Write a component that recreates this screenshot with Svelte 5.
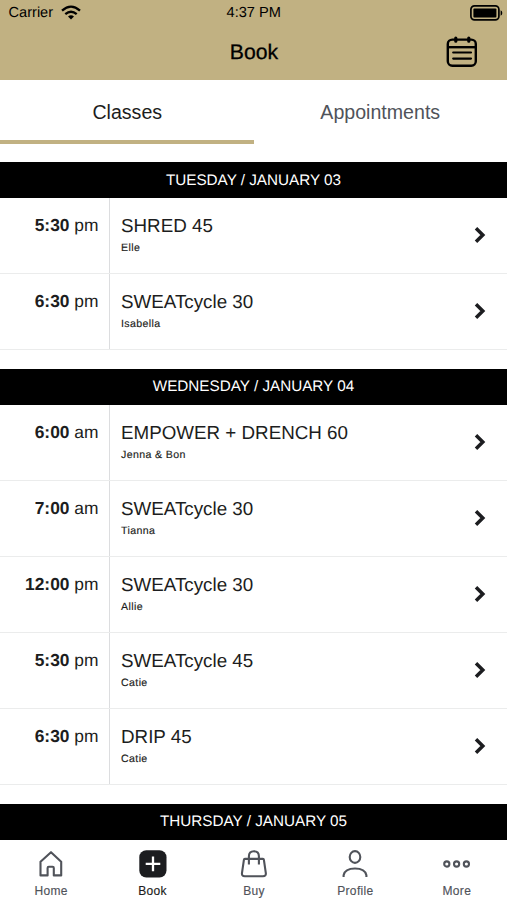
<script>
  const days = [
    {
      label: 'TUESDAY / JANUARY 03',
      classes: [
        { time: '5:30', half: 'pm', name: 'SHRED 45', coach: 'Elle' },
        { time: '6:30', half: 'pm', name: 'SWEATcycle 30', coach: 'Isabella' },
      ],
    },
    {
      label: 'WEDNESDAY / JANUARY 04',
      classes: [
        { time: '6:00', half: 'am', name: 'EMPOWER + DRENCH 60', coach: 'Jenna & Bon' },
        { time: '7:00', half: 'am', name: 'SWEATcycle 30', coach: 'Tianna' },
        { time: '12:00', half: 'pm', name: 'SWEATcycle 30', coach: 'Allie' },
        { time: '5:30', half: 'pm', name: 'SWEATcycle 45', coach: 'Catie' },
        { time: '6:30', half: 'pm', name: 'DRIP 45', coach: 'Catie' },
      ],
    },
    { label: 'THURSDAY / JANUARY 05', classes: [] },
  ];
  const nav = ['Home', 'Book', 'Buy', 'Profile', 'More'];
  let active = $state('Book');
  let tab = $state('Classes');
</script>

<div class="screen">
  <header>
    <div class="status">
      <div class="carrier">
        <span>Carrier</span>
        <svg width="20" height="15" viewBox="0 0 20 15">
          <g fill="none" stroke="#000" stroke-width="2.3">
            <path d="M1 5.6Q10 -2.4 19 5.6" />
            <path d="M4.3 9.2Q10 4.2 15.7 9.2" />
          </g>
          <path d="M10 14.4L7 11.5Q10 9.1 13 11.5Z" />
        </svg>
      </div>
      <div class="clock">4:37 PM</div>
      <div class="battery">
        <svg width="33" height="16" viewBox="0 0 33 16">
          <rect x="0.9" y="0.9" width="28" height="14" rx="3.6" fill="none" stroke="#000" stroke-width="1.7" />
          <rect x="3.4" y="3.4" width="23" height="9" rx="1" />
          <path d="M30.6 5.2Q32.3 5.8 32.3 8T30.6 10.8Z" />
        </svg>
      </div>
    </div>
    <div class="title">
      <h1>Book</h1>
      <svg class="calendar" width="32" height="32" viewBox="0 0 32 32" fill="none" stroke="#000" stroke-width="2.4" stroke-linecap="round">
        <rect x="1.8" y="3.6" width="28" height="26.2" rx="4.5" />
        <path d="M2 11.2H29.6" stroke-linecap="butt" />
        <path d="M7.2 16.5H25M7.2 22.6H25" stroke-width="2.2" />
        <path d="M9.8 2V5.2M22.8 2V5.2" stroke-width="3.2" />
      </svg>
    </div>
  </header>

  <div class="tabs">
    {#each ['Classes', 'Appointments'] as t}
      <button class:on={tab === t} onclick={() => (tab = t)}>{t}</button>
    {/each}
  </div>

  <main>
    {#each days as day}
      <section>
        <h2>{day.label}</h2>
        {#each day.classes as c}
          <div class="row">
            <div class="time"><b>{c.time}</b> {c.half}</div>
            <div class="info">
              <div class="name">{c.name}</div>
              <div class="coach">{c.coach}</div>
            </div>
            <svg class="chevron" width="12" height="18" viewBox="0 0 12 18">
              <path d="M2 2.3L8.8 9L2 15.7" fill="none" stroke="#1c1d20" stroke-width="3.5" />
            </svg>
          </div>
        {/each}
      </section>
    {/each}
  </main>

  <nav>
    {#each nav as item}
      <button class:on={active === item} onclick={() => (active = item)}>
        <svg width="30" height="30" viewBox="0 0 30 30" fill="none" stroke="#50535a" stroke-width="2.1">
          {#if item === 'Home'}
            <path d="M15 3.2L4.5 12.8V26.4H11.6V19Q11.6 17.8 12.8 17.8H16.6Q17.8 17.8 17.8 19V26.4H25.2V12.8Z" stroke-linejoin="round" />
          {:else if item === 'Book'}
            <rect x="1.3" y="1.3" width="27.2" height="27.2" rx="7" fill="#1c1d20" stroke="none" />
            <path d="M15 7.6V22.2M7.7 14.9H22.3" stroke="#fff" stroke-width="2.3" />
          {:else if item === 'Buy'}
            <path d="M5.9 9.9H23.9Q24.8 9.9 24.9 10.8L26.8 23.8Q27.3 27.2 24 27.2H5.8Q2.5 27.2 3 23.8L4.9 10.8Q5 9.9 5.9 9.9Z" />
            <path d="M9.9 15.6V7.2Q9.9 2.2 14.9 2.2T19.9 7.2V15.6" />
          {:else if item === 'Profile'}
            <ellipse cx="15" cy="8" rx="5.3" ry="5.9" />
            <path d="M3.6 28V26.2C4.6 21.3 9 19.5 15 19.5S25.4 21.3 26.4 26.2V28" />
          {:else}
            <circle cx="4.8" cy="15" r="2.6" />
            <circle cx="14.6" cy="15" r="2.6" />
            <circle cx="24.4" cy="15" r="2.6" />
          {/if}
        </svg>
        <span>{item}</span>
      </button>
    {/each}
  </nav>
</div>

<style>
  .screen {
    width: 507px;
    height: 900px;
    display: flex;
    flex-direction: column;
    overflow: hidden;
    background: #fff;
    color: #1c1d20;
    font-family: 'Liberation Sans', Arial, sans-serif;
    text-rendering: geometricPrecision;
  }
  svg { display: block; flex: none; }
  button {
    border: 0;
    padding: 0;
    background: none;
    font-family: inherit;
    color: #50535a;
    cursor: pointer;
  }
  header {
    flex: none;
    height: 80px;
    background: #c1b182;
    color: #000;
  }
  .status {
    display: grid;
    grid-template-columns: 1fr auto 1fr;
    align-items: center;
    height: 25px;
    padding: 0 4px 0 8.5px;
    font-size: 14.6px;
  }
  .carrier { display: flex; align-items: center; gap: 8px; }
  .clock { margin: 0 4px 0 0; }
  .battery { display: flex; justify-content: flex-end; }
  .title {
    display: grid;
    grid-template-columns: 1fr auto 1fr;
    align-items: center;
    height: 54px;
    padding: 0 29px;
  }
  h1 {
    grid-column: 2;
    margin: 2px 0 0 1px;
    font-size: 21.2px;
    font-weight: 400;
    -webkit-text-stroke: 0.3px #000;
  }
  .calendar { justify-self: end; }
  .tabs {
    flex: none;
    display: grid;
    grid-template-columns: 1fr 1fr;
    height: 64px;
    margin-bottom: 18.3px;
  }
  .tabs button {
    padding-top: 4px;
    font-size: 19.6px;
    border-bottom: 4px solid transparent;
  }
  .tabs .on { padding-left: 1px; color: #1c1d20; border-color: #c1b182; }
  main { flex: 1; min-height: 0; overflow: hidden; }
  section { margin-bottom: 18.3px; }
  h2 {
    display: flex;
    align-items: center;
    justify-content: center;
    height: 36px;
    margin: 0;
    background: #000;
    color: #fff;
    font-size: 15.25px;
    font-weight: 400;
  }
  .row {
    box-sizing: border-box;
    display: flex;
    height: 76.1px;
    padding-right: 21px;
    border-bottom: 1px solid #ebecec;
  }
  .time {
    box-sizing: border-box;
    width: 110px;
    padding: 16px 10.5px 0 0;
    border-right: 1px solid #dcdddf;
    text-align: right;
    font-size: 17.4px;
    line-height: 22px;
  }
  .info { flex: 1; padding: 17px 0 0 11px; }
  .name { font-size: 18.8px; line-height: 22px; }
  .coach {
    margin-top: 4px;
    font-size: 10.6px;
    line-height: 14px;
    letter-spacing: 0.38px;
    -webkit-text-stroke: 0.15px currentColor;
  }
  .chevron { margin-top: 28px; }
  nav {
    flex: none;
    display: grid;
    grid-template-columns: repeat(5, 1fr);
    height: 60px;
    background: #fff;
  }
  nav button {
    display: flex;
    flex-direction: column;
    align-items: center;
    padding: 9px 0 0 1px;
    font-size: 12px;
    line-height: 14px;
    letter-spacing: 0.35px;
    -webkit-text-stroke: 0.15px currentColor;
  }
  nav span { margin-top: 5px; }
  nav .on { color: #1c1d20; }
</style>
